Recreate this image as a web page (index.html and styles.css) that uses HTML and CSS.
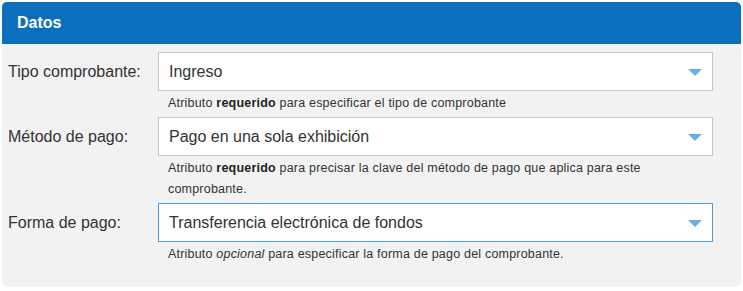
FILE: index.html
```html
<!DOCTYPE html>
<html lang="es">
<head>
    <meta charset="UTF-8">
    <title>Datos</title>
    <link rel="stylesheet" href="styles.css">
</head>
<body>
    <div class="panel">
        <div class="panel-header">Datos</div>
        <div class="panel-body">

            <div class="field">
                <label class="field-label">Tipo comprobante:</label>
                <div class="field-control">
                    <div class="select">
                        <span>Ingreso</span>
                        <span class="arrow"></span>
                    </div>
                    <div class="help">Atributo <b>requerido</b> para especificar el tipo de comprobante</div>
                </div>
            </div>

            <div class="field">
                <label class="field-label">Método de pago:</label>
                <div class="field-control">
                    <div class="select">
                        <span>Pago en una sola exhibición</span>
                        <span class="arrow"></span>
                    </div>
                    <div class="help">Atributo <b>requerido</b> para precisar la clave del método de pago que aplica para este comprobante.</div>
                </div>
            </div>

            <div class="field">
                <label class="field-label">Forma de pago:</label>
                <div class="field-control">
                    <div class="select focused">
                        <span>Transferencia electrónica de fondos</span>
                        <span class="arrow"></span>
                    </div>
                    <div class="help">Atributo <i>opcional</i> para especificar la forma de pago del comprobante.</div>
                </div>
            </div>

        </div>
    </div>
</body>
</html>
```

FILE: styles.css
```css
body {
    font-family: "Liberation Sans", Arial, sans-serif;
    background-color: #fff;
    color: #333;
    margin: 2px;
}

.panel {
    background-color: #f2f2f2;
    border-radius: 5px;
    overflow: hidden;
}

.panel-header {
    background-color: #0b6fbf;
    color: #fff;
    font-weight: bold;
    font-size: 16px;
    height: 42px;
    line-height: 42px;
    padding-left: 15px;
}

.panel-body {
    padding: 8px 28px 19px 6px;
}

.field {
    display: flex;
    align-items: flex-start;
    margin-bottom: 3px;
}

.field-label {
    width: 150px;
    flex-shrink: 0;
    font-size: 16px;
    line-height: 39px;
}

.field-control {
    flex: 1;
}

.select {
    display: flex;
    align-items: center;
    justify-content: space-between;
    height: 37px;
    background-color: #fff;
    border: 1px solid #c6c6c6;
    padding: 0 10px 0 10px;
    font-size: 16px;
}

.select.focused {
    border-color: #4a9ee0;
}

.arrow {
    width: 0;
    height: 0;
    border-left: 7px solid transparent;
    border-right: 7px solid transparent;
    border-top: 7px solid #6aaee3;
    margin-top: 2px;
}

.help {
    font-size: 12.5px;
    letter-spacing: 0.2px;
    line-height: 21px;
    padding: 2px 10px 0 10px;
}

.help b {
    color: #222;
}
```
